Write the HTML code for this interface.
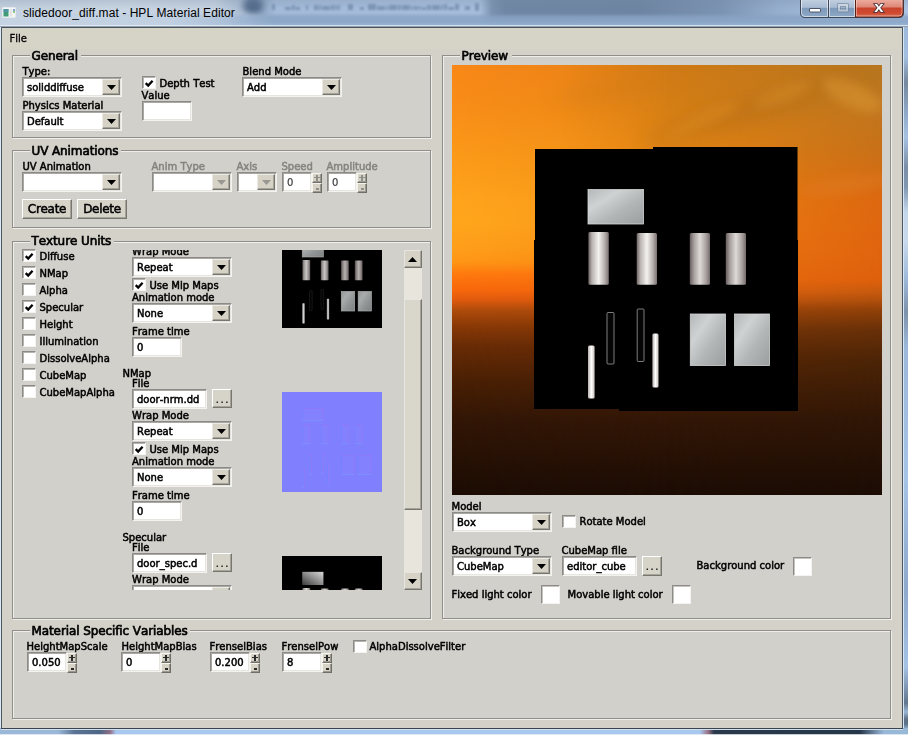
<!DOCTYPE html>
<html><head><meta charset="utf-8"><title>slidedoor_diff.mat - HPL Material Editor</title>
<style>
html,body{margin:0;padding:0}
body{width:908px;height:735px;overflow:hidden;position:relative;background:#a6c4e6;font-family:"DejaVu Sans","Liberation Sans",sans-serif;font-kerning:none}
#tb{position:absolute;left:0;top:0;width:908px;height:27px;background:linear-gradient(90deg,#c3d0de 0px,#c9d5e2 120px,#c4d1e0 215px,#9fb3cb 250px,#8fa6c2 262px,#a3bad8 275px,#a6bddb 480px,#7a91af 492px,#6f86a4 505px,#6d84a2 640px,#7b93b2 720px,#96afcf 780px,#a4bcda 830px,#aac4e2 908px)}
#tbs{position:absolute;left:0;top:0;width:908px;height:27px;background:linear-gradient(180deg,rgba(120,140,165,.25) 0,rgba(255,255,255,0) 9px,rgba(255,255,255,0) 13px,rgba(136,163,197,.8) 17px,rgba(139,167,200,.95) 22px,rgba(150,178,210,.95) 25px)}
#tbg{position:absolute;left:0;top:9px;width:280px;height:17px;background:linear-gradient(90deg,rgba(200,213,228,.95) 0,rgba(198,212,228,.9) 170px,rgba(190,206,226,.6) 225px,rgba(170,190,215,0) 275px);-webkit-mask-image:linear-gradient(180deg,transparent 0,#000 7px);mask-image:linear-gradient(180deg,transparent 0,#000 7px)}
#tbl{position:absolute;left:0;top:25px;width:908px;height:3px;background:linear-gradient(180deg,rgba(230,240,250,.55) 0,rgba(235,243,252,.9) 1px,#46525e 2px,#46525e 3px)}
#title{position:absolute;left:23px;top:4px;font-family:"Liberation Sans",sans-serif;font-size:12px;letter-spacing:0.06px;line-height:18px;color:#000;white-space:nowrap}
#client{position:absolute;left:2px;top:28px;width:900px;height:700px;background:#d4d1c9}
#menu{position:absolute;left:2px;top:28px;width:900px;height:21px;background:#d6d3c7}
#c{position:absolute;left:0;top:0;width:908px;height:735px;will-change:transform}
.t{position:absolute;white-space:nowrap;-webkit-text-stroke:0.5px currentColor}
.gtt{letter-spacing:-0.1px;-webkit-text-stroke:0.65px currentColor}
.grp{position:absolute;box-sizing:border-box;border:1px solid #8f8e8a;box-shadow:1px 1px 0 #efeeea;background:#d1d0cb}
.grpi{position:absolute;left:0;top:0;right:0;bottom:0;border-left:1px solid #efeeea;border-top:1px solid #efeeea}
.gt{position:absolute;background:#d4d1c9}
.sunk{position:absolute;box-sizing:border-box;background:#fff;border-top:1px solid #8c8b87;border-left:1px solid #8c8b87;border-right:1px solid #f4f3f0;border-bottom:1px solid #f4f3f0;box-shadow:inset 1px 1px 0 #a9a8a3, inset -1px -1px 0 #e6e5e0}
.ct{position:absolute;left:4px;top:3px;font-size:10px;line-height:14px;white-space:nowrap;-webkit-text-stroke:0.5px currentColor}
.cbtn{position:absolute;right:1px;top:1px;width:18px;height:16px;box-sizing:border-box;background:#d6d3c6;border-top:1px solid #eceae4;border-left:1px solid #eceae4;border-right:1px solid #77766f;border-bottom:1px solid #77766f;box-shadow:inset -1px -1px 0 #a5a39a}
.chk{position:absolute;width:14px;height:13px;box-sizing:border-box;background:#fff;border-top:1px solid #8c8b87;border-left:1px solid #8c8b87;border-right:1px solid #f4f3f0;border-bottom:1px solid #f4f3f0;box-shadow:inset 1px 1px 0 #b5b4af}
.btn{position:absolute;box-sizing:border-box;background:#d6d3c8;border-top:1px solid #fff;border-left:1px solid #fff;border-right:1px solid #77766f;border-bottom:1px solid #77766f;box-shadow:inset -1px -1px 0 #a5a39a;text-align:center;white-space:nowrap;letter-spacing:-0.3px;-webkit-text-stroke:0.5px currentColor}
.sb{position:absolute;width:10px;height:10px;box-sizing:border-box;background:#d6d3c6;border-top:1px solid #f4f3ee;border-left:1px solid #f4f3ee;border-right:1px solid #6f6e68;border-bottom:1px solid #6f6e68;box-shadow:inset -1px -1px 0 #9a988f}
.sb i{position:absolute;background:#333;display:block}
.colb{position:absolute;width:19px;height:19px;box-sizing:border-box;background:#fff;border-top:1px solid #8c8b87;border-left:1px solid #8c8b87;border-right:1px solid #f4f3f0;border-bottom:1px solid #f4f3f0;box-shadow:inset 1px 1px 0 #c5c4bf}
.clip{position:absolute;overflow:hidden}
.strack{position:absolute;background:#e7e5dc}
.sbtn{position:absolute;width:18px;height:18px;box-sizing:border-box;background:#d6d3c6;border-top:1px solid #e6e5e0;border-left:1px solid #e6e5e0;border-right:1px solid #77766f;border-bottom:1px solid #77766f;box-shadow:inset -1px -1px 0 #a5a39a}
.sthumb{position:absolute;box-sizing:border-box;background:#d9d6cb;border-top:1px solid #e6e5e0;border-left:1px solid #e6e5e0;border-right:1px solid #77766f;border-bottom:1px solid #77766f;box-shadow:inset -1px -1px 0 #a5a39a}
/* window chrome */
#wl{position:absolute;left:0;top:27px;width:2px;height:703px;background:linear-gradient(90deg,#dfe9f3 0,#dfe9f3 1px,#4b5763 1px,#4b5763 2px)}
#wr{position:absolute;left:902px;top:27px;width:6px;height:703px;background:linear-gradient(90deg,#4b5763 0,#4b5763 1px,#dbe7f3 1px,#dbe7f3 2px,rgba(0,0,0,0) 2px),linear-gradient(180deg,#9db9d9 0,#a3bfdf 30px,#76889e 55px,#8ea8c6 85px,#a6c2e2 110px,#7b8ea6 140px,#8097b2 160px,#c4d6ea 185px,#c9d9ec 215px,#9fbbdb 250px,#7d92ac 285px,#9cb8d8 320px,#a6c4e6 450px,#8ea9c9 560px,#a4c2e4 640px,#62768e 676px,#9ab6d4 685px,#5d7188 692px,#5d7188 697px,#a0c0e0 703px)}
#wb{position:absolute;left:0;top:728px;width:908px;height:7px;border-bottom:1px solid rgba(235,243,250,.8);box-sizing:border-box;background:linear-gradient(90deg,#9cb8d8 0,#9cb8d8 58px,#5b7394 74px,#4f6786 100px,#8f6f86 110px,#a8c8f0 116px,#a8c8f0 700px,#9a7384 708px,#2a3a4c 714px,#27374a 860px,#7f9ab8 878px,#98b8d8 884px,#98b8d8 908px)}
#wbl{position:absolute;left:1px;top:728px;width:902px;height:2px;background:linear-gradient(180deg,#3a444e 0,#3a444e 1px,#d3e2f1 1px,#d3e2f1 2px)}
#caps{position:absolute;left:800px;top:0;width:104px;height:18px;will-change:transform}
#ico{position:absolute;left:2px;top:7px;width:14px;height:11px}
</style></head>
<body>
<div id="tb"></div><svg id="smg" width="908" height="27" viewBox="0 0 908 27" style="position:absolute;left:0;top:0"><defs><filter id="sb1" x="-5%" y="-100%" width="110%" height="300%"><feGaussianBlur stdDeviation="1.3"/></filter><filter id="sb2" x="-50%" y="-100%" width="200%" height="300%"><feGaussianBlur stdDeviation="3"/></filter></defs><g filter="url(#sb1)" fill="#5f7899" opacity=".55"><rect x="272" y="4" width="3" height="6"/><rect x="285" y="7" width="6" height="3"/><rect x="292" y="5" width="3" height="5"/><rect x="296" y="7" width="4" height="3"/><rect x="306" y="5" width="2" height="5"/><rect x="314" y="5" width="4" height="5"/><rect x="319" y="5" width="2" height="5"/><rect x="322" y="6" width="8" height="4"/><rect x="331" y="5" width="3" height="5"/><rect x="335" y="5" width="2" height="5"/><rect x="338" y="5" width="2" height="5"/><rect x="348" y="4" width="5" height="6"/><rect x="360" y="7" width="4" height="3"/><rect x="368" y="4" width="8" height="6"/><rect x="377" y="6" width="8" height="4"/><rect x="386" y="6" width="2" height="4"/><rect x="389" y="5" width="8" height="5"/><rect x="398" y="5" width="3" height="5"/><rect x="402" y="5" width="8" height="5"/><rect x="411" y="6" width="2" height="4"/><rect x="414" y="6" width="4" height="4"/><rect x="419" y="6" width="2" height="4"/><rect x="422" y="7" width="4" height="3"/><rect x="427" y="5" width="4" height="5"/><rect x="432" y="5" width="8" height="5"/><rect x="441" y="5" width="2" height="5"/><rect x="444" y="4" width="3" height="6"/><rect x="448" y="7" width="6" height="3"/><rect x="455" y="4" width="4" height="6"/><rect x="465" y="6" width="5" height="4"/><rect x="475" y="3" width="4" height="8"/></g><ellipse cx="253" cy="5" rx="10" ry="10" fill="#4c6384" opacity=".9" filter="url(#sb2)"/></svg><div id="tbs"></div><div id="tbg"></div><div id="tbl"></div>
<svg id="ico" viewBox="0 0 14 11"><rect x="0" y="0" width="14" height="11" rx="1" fill="#f4f6f8" stroke="#c2cad2" stroke-width="0.6"/><rect x="1.5" y="2" width="5" height="7.5" fill="#3f9a78"/><rect x="1.5" y="2" width="5" height="3" fill="#5b8fc0" opacity=".6"/><rect x="7.6" y="2" width="2.6" height="7.5" fill="#e3e3e3"/><rect x="11" y="2" width="2" height="3.5" fill="#7fa6cf"/><rect x="11" y="4" width="2" height="1.8" fill="#8fc77f"/></svg>
<div id="title">slidedoor_diff.mat - HPL Material Editor</div>
<svg id="caps" viewBox="0 0 104 18">
<defs>
<linearGradient id="gb" x1="0" y1="0" x2="0" y2="1"><stop offset="0" stop-color="#c3d0e0"/><stop offset=".45" stop-color="#a9bcd3"/><stop offset=".5" stop-color="#7e99b9"/><stop offset="1" stop-color="#8fa9c8"/></linearGradient>
<linearGradient id="gr" x1="0" y1="0" x2="0" y2="1"><stop offset="0" stop-color="#eeb1a3"/><stop offset=".45" stop-color="#dd8574"/><stop offset=".5" stop-color="#c9422b"/><stop offset=".8" stop-color="#cf4b32"/><stop offset="1" stop-color="#d97a62"/></linearGradient>
</defs>
<path d="M0.5 -1V13Q0.5 17.5 5 17.5H99Q103.5 17.5 103.5 13V-1Z" fill="url(#gb)" stroke="#3c4858" stroke-width="1"/>
<path d="M55.5 -1H103V13Q103 17 99 17H55.5Z" fill="url(#gr)" stroke="#5a1d14" stroke-width="1"/>
<path d="M1.5 0V13Q1.5 16.5 5 16.5H27.5V0M29.5 0V16.5H54.5V0" fill="none" stroke="rgba(255,255,255,.55)" stroke-width="1"/>
<path d="M56.5 0V16H99Q102 16 102 13V0" fill="none" stroke="rgba(255,220,210,.5)" stroke-width="1"/>
<line x1="28.5" y1="0" x2="28.5" y2="17" stroke="#3c4858"/>
<rect x="9.5" y="8.5" width="11" height="3.5" rx=".5" fill="#fff" stroke="#4a5668" stroke-width="1"/>
<g opacity=".55"><rect x="37.5" y="3.5" width="11" height="8.500" rx=".5" fill="#dfe6ee" stroke="#6d7c8f" stroke-width="1"/><rect x="40.500" y="6.500" width="5" height="2.500" fill="#9fb2c8" stroke="#6d7c8f" stroke-width="1"/></g>
<text x="79" y="11.8" text-anchor="middle" font-family="Liberation Sans, sans-serif" font-weight="bold" font-size="14.5" fill="#fff" stroke="#46323c" stroke-width="1.6" paint-order="stroke" transform="translate(79 0) scale(1.15 1) translate(-79 0)">x</text>
</svg>
<div id="client"></div><div id="menu"></div>
<div id="wl"></div><div id="wr"></div><div id="wb"></div><div id="wbl"></div>
<div id="c">
<div class="t" style="left:9.5px;top:32px;font-size:10px;line-height:14px;-webkit-text-stroke-width:0.3px">File</div>
<div class="grp" style="left:12px;top:55px;width:419px;height:83px"><div class="grpi"></div></div>
<div class="gt" style="left:29.5px;top:55px;width:51.5px;height:1px"></div><div class="gt" style="left:29.5px;top:56px;width:51.5px;height:1px;background:#d1d0cb"></div>
<div class="t gtt" style="left:31.5px;top:48px;font-size:12px;line-height:16px;color:#000;">General</div>
<div class="grp" style="left:12px;top:150px;width:419px;height:78px"><div class="grpi"></div></div>
<div class="gt" style="left:29.5px;top:150px;width:91.5px;height:1px"></div><div class="gt" style="left:29.5px;top:151px;width:91.5px;height:1px;background:#d1d0cb"></div>
<div class="t gtt" style="left:31.5px;top:143px;font-size:12px;line-height:16px;color:#000;">UV Animations</div>
<div class="grp" style="left:12px;top:241px;width:419px;height:378px"><div class="grpi"></div></div>
<div class="gt" style="left:29.5px;top:241px;width:84.5px;height:1px"></div><div class="gt" style="left:29.5px;top:242px;width:84.5px;height:1px;background:#d1d0cb"></div>
<div class="t gtt" style="left:31.5px;top:233px;font-size:12px;line-height:16px;color:#000;">Texture Units</div>
<div class="grp" style="left:442px;top:55px;width:449px;height:564px"><div class="grpi"></div></div>
<div class="gt" style="left:459.5px;top:55px;width:52.5px;height:1px"></div><div class="gt" style="left:459.5px;top:56px;width:52.5px;height:1px;background:#d1d0cb"></div>
<div class="t gtt" style="left:461.5px;top:48px;font-size:12px;line-height:16px;color:#000;">Preview</div>
<div class="grp" style="left:12px;top:630px;width:879px;height:89px"><div class="grpi"></div></div>
<div class="gt" style="left:29.5px;top:630px;width:160.5px;height:1px"></div><div class="gt" style="left:29.5px;top:631px;width:160.5px;height:1px;background:#d1d0cb"></div>
<div class="t gtt" style="left:31.5px;top:623px;font-size:12px;line-height:16px;color:#000;">Material Specific Variables</div>
<div class="t " style="left:22.5px;top:65px;font-size:10px;line-height:14px;color:#000;">Type:</div>
<div class="sunk" style="left:22px;top:77px;width:100px;height:20px"><span class="ct" style="color:#000">soliddiffuse</span><div class="cbtn"><svg width="9" height="5" viewBox="0 0 9 5" style="position:absolute;left:4px;top:5px"><path d="M0 0H9L4.5 5Z" fill="#000"/></svg></div></div>
<div class="t " style="left:22.5px;top:99px;font-size:10px;line-height:14px;color:#000;">Physics Material</div>
<div class="sunk" style="left:22px;top:111px;width:100px;height:20px"><span class="ct" style="color:#000">Default</span><div class="cbtn"><svg width="9" height="5" viewBox="0 0 9 5" style="position:absolute;left:4px;top:5px"><path d="M0 0H9L4.5 5Z" fill="#000"/></svg></div></div>
<div class="chk" style="left:142px;top:76px"><svg width="13" height="13" viewBox="0 0 13 13" style="position:absolute;left:0;top:0"><path d="M2.7 6.1L5.2 8.6L9.6 3.8" stroke="#000" stroke-width="2.3" fill="none"/></svg></div>
<div class="t " style="left:159.5px;top:77px;font-size:10px;line-height:14px;color:#000;">Depth Test</div>
<div class="t " style="left:141.5px;top:89px;font-size:10px;line-height:14px;color:#000;">Value</div>
<div class="sunk" style="left:142px;top:101px;width:50px;height:20px"><span class="ct" style="left:4px"></span></div>
<div class="t " style="left:242.5px;top:65px;font-size:10px;line-height:14px;color:#000;">Blend Mode</div>
<div class="sunk" style="left:242px;top:77px;width:100px;height:20px"><span class="ct" style="color:#000">Add</span><div class="cbtn"><svg width="9" height="5" viewBox="0 0 9 5" style="position:absolute;left:4px;top:5px"><path d="M0 0H9L4.5 5Z" fill="#000"/></svg></div></div>
<div class="t " style="left:22.5px;top:160px;font-size:10px;line-height:14px;color:#000;">UV Animation</div>
<div class="sunk" style="left:22px;top:172px;width:100px;height:20px"><span class="ct" style="color:#000"></span><div class="cbtn"><svg width="9" height="5" viewBox="0 0 9 5" style="position:absolute;left:4px;top:5px"><path d="M0 0H9L4.5 5Z" fill="#000"/></svg></div></div>
<div class="t " style="left:151.5px;top:160px;font-size:10px;line-height:14px;color:#85847f;">Anim Type</div>
<div class="sunk" style="left:152px;top:172px;width:80px;height:20px"><span class="ct" style="color:#8a8a86"></span><div class="cbtn"><svg width="9" height="5" viewBox="0 0 9 5" style="position:absolute;left:4px;top:5px"><path d="M0 0H9L4.5 5Z" fill="#9a9892"/></svg></div></div>
<div class="t " style="left:236.5px;top:160px;font-size:10px;line-height:14px;color:#85847f;">Axis</div>
<div class="sunk" style="left:237px;top:172px;width:40px;height:20px"><span class="ct" style="color:#8a8a86"></span><div class="cbtn"><svg width="9" height="5" viewBox="0 0 9 5" style="position:absolute;left:4px;top:5px"><path d="M0 0H9L4.5 5Z" fill="#9a9892"/></svg></div></div>
<div class="t " style="left:281.5px;top:160px;font-size:10px;line-height:14px;color:#85847f;">Speed</div>
<div class="sunk" style="left:282px;top:172px;width:30px;height:20px"><span class="ct" style="left:4px;color:#3c3c3c;-webkit-text-stroke-width:0.2px">0</span></div><div class="sb" style="left:312px;top:173px"><i style="left:1px;top:3px;width:6px;height:1.3px;background:#8f8e88"></i><i style="left:3.3px;top:0.5px;width:1.4px;height:6.5px;background:#8f8e88"></i></div><div class="sb" style="left:312px;top:183px"><i style="left:2.5px;top:4px;width:3.5px;height:1.5px;background:#8f8e88"></i></div>
<div class="t " style="left:326.5px;top:160px;font-size:10px;line-height:14px;color:#85847f;">Amplitude</div>
<div class="sunk" style="left:327px;top:172px;width:30px;height:20px"><span class="ct" style="left:4px;color:#3c3c3c;-webkit-text-stroke-width:0.2px">0</span></div><div class="sb" style="left:357px;top:173px"><i style="left:1px;top:3px;width:6px;height:1.3px;background:#8f8e88"></i><i style="left:3.3px;top:0.5px;width:1.4px;height:6.5px;background:#8f8e88"></i></div><div class="sb" style="left:357px;top:183px"><i style="left:2.5px;top:4px;width:3.5px;height:1.5px;background:#8f8e88"></i></div>
<div class="btn" style="left:22px;top:199px;width:50px;height:20px;font-size:12px;line-height:18px">Create</div>
<div class="btn" style="left:77px;top:199px;width:50px;height:20px;font-size:12px;line-height:18px">Delete</div>
<div class="chk" style="left:22px;top:249px"><svg width="13" height="13" viewBox="0 0 13 13" style="position:absolute;left:0;top:0"><path d="M2.7 6.1L5.2 8.6L9.6 3.8" stroke="#000" stroke-width="2.3" fill="none"/></svg></div>
<div class="t " style="left:39.5px;top:250px;font-size:10px;line-height:14px;color:#000;">Diffuse</div>
<div class="chk" style="left:22px;top:266px"><svg width="13" height="13" viewBox="0 0 13 13" style="position:absolute;left:0;top:0"><path d="M2.7 6.1L5.2 8.6L9.6 3.8" stroke="#000" stroke-width="2.3" fill="none"/></svg></div>
<div class="t " style="left:39.5px;top:267px;font-size:10px;line-height:14px;color:#000;">NMap</div>
<div class="chk" style="left:22px;top:283px"></div>
<div class="t " style="left:39.5px;top:284px;font-size:10px;line-height:14px;color:#000;">Alpha</div>
<div class="chk" style="left:22px;top:300px"><svg width="13" height="13" viewBox="0 0 13 13" style="position:absolute;left:0;top:0"><path d="M2.7 6.1L5.2 8.6L9.6 3.8" stroke="#000" stroke-width="2.3" fill="none"/></svg></div>
<div class="t " style="left:39.5px;top:301px;font-size:10px;line-height:14px;color:#000;">Specular</div>
<div class="chk" style="left:22px;top:317px"></div>
<div class="t " style="left:39.5px;top:318px;font-size:10px;line-height:14px;color:#000;">Height</div>
<div class="chk" style="left:22px;top:334px"></div>
<div class="t " style="left:39.5px;top:335px;font-size:10px;line-height:14px;color:#000;">Illumination</div>
<div class="chk" style="left:22px;top:351px"></div>
<div class="t " style="left:39.5px;top:352px;font-size:10px;line-height:14px;color:#000;">DissolveAlpha</div>
<div class="chk" style="left:22px;top:368px"></div>
<div class="t " style="left:39.5px;top:369px;font-size:10px;line-height:14px;color:#000;">CubeMap</div>
<div class="chk" style="left:22px;top:385px"></div>
<div class="t " style="left:39.5px;top:386px;font-size:10px;line-height:14px;color:#000;">CubeMapAlpha</div>
<div class="clip" style="left:100px;top:250px;width:300px;height:340px">
<div class="t " style="left:22.5px;top:-47px;font-size:10px;line-height:14px;color:#000;">Diffuse</div>
<div class="t " style="left:32.0px;top:-37px;font-size:10px;line-height:14px;color:#000;">File</div>
<div class="sunk" style="left:32px;top:-25.0px;width:75px;height:20px"><span class="ct" style="left:4px">door_diff.dd</span></div>
<div class="btn" style="left:112px;top:-25.0px;width:20px;height:19px;font-size:10px;line-height:19px"><span style="letter-spacing:1.6px;margin-left:1.6px;-webkit-text-stroke-width:0.2px">...</span></div>
<div class="t " style="left:32.0px;top:-5px;font-size:10px;line-height:14px;color:#000;">Wrap Mode</div>
<div class="sunk" style="left:32px;top:7.0px;width:100px;height:20px"><span class="ct" style="color:#000">Repeat</span><div class="cbtn"><svg width="9" height="5" viewBox="0 0 9 5" style="position:absolute;left:4px;top:5px"><path d="M0 0H9L4.5 5Z" fill="#000"/></svg></div></div>
<div class="chk" style="left:32px;top:28.0px"><svg width="13" height="13" viewBox="0 0 13 13" style="position:absolute;left:0;top:0"><path d="M2.7 6.1L5.2 8.6L9.6 3.8" stroke="#000" stroke-width="2.3" fill="none"/></svg></div>
<div class="t " style="left:49.5px;top:29px;font-size:10px;line-height:14px;color:#000;">Use Mip Maps</div>
<div class="t " style="left:32.0px;top:41px;font-size:10px;line-height:14px;color:#000;">Animation mode</div>
<div class="sunk" style="left:32px;top:53.0px;width:100px;height:20px"><span class="ct" style="color:#000">None</span><div class="cbtn"><svg width="9" height="5" viewBox="0 0 9 5" style="position:absolute;left:4px;top:5px"><path d="M0 0H9L4.5 5Z" fill="#000"/></svg></div></div>
<div class="t " style="left:32.0px;top:75px;font-size:10px;line-height:14px;color:#000;">Frame time</div>
<div class="sunk" style="left:32px;top:87.0px;width:50px;height:20px"><span class="ct" style="left:4px">0</span></div>
<div style="position:absolute;left:182px;top:-22.0px;width:100px;height:100px"><svg width="100" height="100" viewBox="0 0 100 100" style="display:block"><rect width="100" height="100" fill="#000"/><g transform="scale(0.3817)" opacity=".82"><rect x="53.0" y="41.5" width="55.5" height="34.5" fill="url(#sil)" stroke="#d4d6d6" stroke-width="1.6"/><rect x="53.4" y="84.0" width="20.4" height="52.7" fill="url(#cyl)" rx="1.5"/><rect x="101.7" y="85.0" width="20.3" height="51.7" fill="url(#cyl)" rx="1.5"/><rect x="154.8" y="85.0" width="20.2" height="51.7" fill="url(#cyl2)" rx="1.5"/><rect x="190.8" y="85.0" width="20.2" height="51.7" fill="url(#cyl2)" rx="1.5"/><rect x="53.0" y="197.4" width="6.6" height="53.0" fill="url(#bar)" rx="1.5"/><rect x="117.4" y="185.5" width="6.1" height="54.0" fill="url(#bar)" rx="1.5"/><rect x="72.0" y="164.5" width="7.0" height="51.5" fill="#050505" stroke="#2c2c2c" stroke-width="1.6" rx="1"/><rect x="102.2" y="161.0" width="6.8" height="52.5" fill="#050505" stroke="#2c2c2c" stroke-width="1.6" rx="1"/><rect x="155.3" y="166.0" width="35.2" height="51.5" fill="url(#sil)" stroke="#d4d6d6" stroke-width="1.6"/><rect x="199.5" y="166.0" width="35.0" height="51.5" fill="url(#sil)" stroke="#d4d6d6" stroke-width="1.6"/></g></svg></div>
<div class="t " style="left:22.5px;top:117px;font-size:10px;line-height:14px;color:#000;">NMap</div>
<div class="t " style="left:32.0px;top:127px;font-size:10px;line-height:14px;color:#000;">File</div>
<div class="sunk" style="left:32px;top:139.0px;width:75px;height:20px"><span class="ct" style="left:4px">door-nrm.dd</span></div>
<div class="btn" style="left:112px;top:139.0px;width:20px;height:19px;font-size:10px;line-height:19px"><span style="letter-spacing:1.6px;margin-left:1.6px;-webkit-text-stroke-width:0.2px">...</span></div>
<div class="t " style="left:32.0px;top:159px;font-size:10px;line-height:14px;color:#000;">Wrap Mode</div>
<div class="sunk" style="left:32px;top:171.0px;width:100px;height:20px"><span class="ct" style="color:#000">Repeat</span><div class="cbtn"><svg width="9" height="5" viewBox="0 0 9 5" style="position:absolute;left:4px;top:5px"><path d="M0 0H9L4.5 5Z" fill="#000"/></svg></div></div>
<div class="chk" style="left:32px;top:192.0px"><svg width="13" height="13" viewBox="0 0 13 13" style="position:absolute;left:0;top:0"><path d="M2.7 6.1L5.2 8.6L9.6 3.8" stroke="#000" stroke-width="2.3" fill="none"/></svg></div>
<div class="t " style="left:49.5px;top:193px;font-size:10px;line-height:14px;color:#000;">Use Mip Maps</div>
<div class="t " style="left:32.0px;top:205px;font-size:10px;line-height:14px;color:#000;">Animation mode</div>
<div class="sunk" style="left:32px;top:217.0px;width:100px;height:20px"><span class="ct" style="color:#000">None</span><div class="cbtn"><svg width="9" height="5" viewBox="0 0 9 5" style="position:absolute;left:4px;top:5px"><path d="M0 0H9L4.5 5Z" fill="#000"/></svg></div></div>
<div class="t " style="left:32.0px;top:239px;font-size:10px;line-height:14px;color:#000;">Frame time</div>
<div class="sunk" style="left:32px;top:251.0px;width:50px;height:20px"><span class="ct" style="left:4px">0</span></div>
<div style="position:absolute;left:182px;top:142.0px;width:100px;height:100px"><svg width="100" height="100" viewBox="0 0 100 100" style="display:block"><rect width="100" height="100" fill="#8080ff"/><g transform="scale(0.3817)" opacity=".75"><rect x="53.0" y="41.5" width="55.5" height="34.5" fill="#8482fd"/><rect x="53.0" y="41.5" width="2.2" height="34.5" fill="#7284ff"/><rect x="106.3" y="41.5" width="2.2" height="34.5" fill="#9678f6"/><rect x="53.0" y="41.5" width="55.5" height="2.2" fill="#9476f2"/><rect x="53.0" y="73.8" width="55.5" height="2.2" fill="#7c98ff"/><rect x="53.4" y="84.0" width="20.4" height="52.7" fill="#8482fd"/><rect x="53.4" y="84.0" width="2.2" height="52.7" fill="#7284ff"/><rect x="71.6" y="84.0" width="2.2" height="52.7" fill="#9678f6"/><rect x="53.4" y="84.0" width="20.4" height="2.2" fill="#9476f2"/><rect x="53.4" y="134.5" width="20.4" height="2.2" fill="#7c98ff"/><rect x="101.7" y="85.0" width="20.3" height="51.7" fill="#8482fd"/><rect x="101.7" y="85.0" width="2.2" height="51.7" fill="#7284ff"/><rect x="119.8" y="85.0" width="2.2" height="51.7" fill="#9678f6"/><rect x="101.7" y="85.0" width="20.3" height="2.2" fill="#9476f2"/><rect x="101.7" y="134.5" width="20.3" height="2.2" fill="#7c98ff"/><rect x="154.8" y="85.0" width="20.2" height="51.7" fill="#8482fd"/><rect x="154.8" y="85.0" width="2.2" height="51.7" fill="#7284ff"/><rect x="172.8" y="85.0" width="2.2" height="51.7" fill="#9678f6"/><rect x="154.8" y="85.0" width="20.2" height="2.2" fill="#9476f2"/><rect x="154.8" y="134.5" width="20.2" height="2.2" fill="#7c98ff"/><rect x="190.8" y="85.0" width="20.2" height="51.7" fill="#8482fd"/><rect x="190.8" y="85.0" width="2.2" height="51.7" fill="#7284ff"/><rect x="208.8" y="85.0" width="2.2" height="51.7" fill="#9678f6"/><rect x="190.8" y="85.0" width="20.2" height="2.2" fill="#9476f2"/><rect x="190.8" y="134.5" width="20.2" height="2.2" fill="#7c98ff"/><rect x="53.0" y="197.4" width="6.6" height="53.0" fill="#8482fd"/><rect x="53.0" y="197.4" width="2.2" height="53.0" fill="#7284ff"/><rect x="57.4" y="197.4" width="2.2" height="53.0" fill="#9678f6"/><rect x="53.0" y="197.4" width="6.6" height="2.2" fill="#9476f2"/><rect x="53.0" y="248.2" width="6.6" height="2.2" fill="#7c98ff"/><rect x="117.4" y="185.5" width="6.1" height="54.0" fill="#8482fd"/><rect x="117.4" y="185.5" width="2.2" height="54.0" fill="#7284ff"/><rect x="121.3" y="185.5" width="2.2" height="54.0" fill="#9678f6"/><rect x="117.4" y="185.5" width="6.1" height="2.2" fill="#9476f2"/><rect x="117.4" y="237.3" width="6.1" height="2.2" fill="#7c98ff"/><rect x="72.0" y="164.5" width="7.0" height="51.5" fill="#8482fd"/><rect x="72.0" y="164.5" width="2.2" height="51.5" fill="#7284ff"/><rect x="76.8" y="164.5" width="2.2" height="51.5" fill="#9678f6"/><rect x="72.0" y="164.5" width="7.0" height="2.2" fill="#9476f2"/><rect x="72.0" y="213.8" width="7.0" height="2.2" fill="#7c98ff"/><rect x="102.2" y="161.0" width="6.8" height="52.5" fill="#8482fd"/><rect x="102.2" y="161.0" width="2.2" height="52.5" fill="#7284ff"/><rect x="106.8" y="161.0" width="2.2" height="52.5" fill="#9678f6"/><rect x="102.2" y="161.0" width="6.8" height="2.2" fill="#9476f2"/><rect x="102.2" y="211.3" width="6.8" height="2.2" fill="#7c98ff"/><rect x="155.3" y="166.0" width="35.2" height="51.5" fill="#8482fd"/><rect x="155.3" y="166.0" width="2.2" height="51.5" fill="#7284ff"/><rect x="188.3" y="166.0" width="2.2" height="51.5" fill="#9678f6"/><rect x="155.3" y="166.0" width="35.2" height="2.2" fill="#9476f2"/><rect x="155.3" y="215.3" width="35.2" height="2.2" fill="#7c98ff"/><rect x="199.5" y="166.0" width="35.0" height="51.5" fill="#8482fd"/><rect x="199.5" y="166.0" width="2.2" height="51.5" fill="#7284ff"/><rect x="232.3" y="166.0" width="2.2" height="51.5" fill="#9678f6"/><rect x="199.5" y="166.0" width="35.0" height="2.2" fill="#9476f2"/><rect x="199.5" y="215.3" width="35.0" height="2.2" fill="#7c98ff"/></g></svg></div>
<div class="t " style="left:22.5px;top:281px;font-size:10px;line-height:14px;color:#000;">Specular</div>
<div class="t " style="left:32.0px;top:291px;font-size:10px;line-height:14px;color:#000;">File</div>
<div class="sunk" style="left:32px;top:303.0px;width:75px;height:20px"><span class="ct" style="left:4px">door_spec.d</span></div>
<div class="btn" style="left:112px;top:303.0px;width:20px;height:19px;font-size:10px;line-height:19px"><span style="letter-spacing:1.6px;margin-left:1.6px;-webkit-text-stroke-width:0.2px">...</span></div>
<div class="t " style="left:32.0px;top:323px;font-size:10px;line-height:14px;color:#000;">Wrap Mode</div>
<div class="sunk" style="left:32px;top:335.0px;width:100px;height:20px"><span class="ct" style="color:#000">Repeat</span><div class="cbtn"><svg width="9" height="5" viewBox="0 0 9 5" style="position:absolute;left:4px;top:5px"><path d="M0 0H9L4.5 5Z" fill="#000"/></svg></div></div>
<div class="chk" style="left:32px;top:356.0px"><svg width="13" height="13" viewBox="0 0 13 13" style="position:absolute;left:0;top:0"><path d="M2.7 6.1L5.2 8.6L9.6 3.8" stroke="#000" stroke-width="2.3" fill="none"/></svg></div>
<div class="t " style="left:49.5px;top:357px;font-size:10px;line-height:14px;color:#000;">Use Mip Maps</div>
<div class="t " style="left:32.0px;top:369px;font-size:10px;line-height:14px;color:#000;">Animation mode</div>
<div class="sunk" style="left:32px;top:381.0px;width:100px;height:20px"><span class="ct" style="color:#000">None</span><div class="cbtn"><svg width="9" height="5" viewBox="0 0 9 5" style="position:absolute;left:4px;top:5px"><path d="M0 0H9L4.5 5Z" fill="#000"/></svg></div></div>
<div class="t " style="left:32.0px;top:403px;font-size:10px;line-height:14px;color:#000;">Frame time</div>
<div class="sunk" style="left:32px;top:415.0px;width:50px;height:20px"><span class="ct" style="left:4px">0</span></div>
<div style="position:absolute;left:182px;top:306.0px;width:100px;height:100px"><svg width="100" height="100" viewBox="0 0 100 100" style="display:block"><rect width="100" height="100" fill="#000"/><g transform="scale(0.3817)" ><rect x="53.0" y="41.5" width="55.5" height="34.5" fill="url(#spg)"/><rect x="53.4" y="84.0" width="20.4" height="52.7" fill="url(#cyl2)" rx="1.5"/><rect x="101.7" y="85.0" width="20.3" height="51.7" fill="url(#cyl2)" rx="1.5"/><rect x="154.8" y="85.0" width="20.2" height="51.7" fill="url(#cyl2)" rx="1.5"/><rect x="190.8" y="85.0" width="20.2" height="51.7" fill="url(#cyl2)" rx="1.5"/><rect x="53.0" y="197.4" width="6.6" height="53.0" fill="url(#bar)" rx="1.5"/><rect x="117.4" y="185.5" width="6.1" height="54.0" fill="url(#bar)" rx="1.5"/><rect x="155.3" y="166.0" width="35.2" height="51.5" fill="url(#spg)"/><rect x="199.5" y="166.0" width="35.0" height="51.5" fill="url(#spg)"/></g></svg></div>
</div>
<div class="strack" style="left:404px;top:250px;width:18px;height:340px"></div>
<div class="sbtn" style="left:404px;top:250px"><svg width="9" height="5" viewBox="0 0 9 5" style="position:absolute;left:3px;top:6px"><path d="M0 5H9L4.5 0Z" fill="#000"/></svg></div>
<div class="sbtn" style="left:404px;top:572px"><svg width="9" height="5" viewBox="0 0 9 5" style="position:absolute;left:3px;top:6px"><path d="M0 0H9L4.5 5Z" fill="#000"/></svg></div>
<div class="sthumb" style="left:404px;top:299px;width:18px;height:211px"></div>
<div style="position:absolute;left:452px;top:65px;width:430px;height:430px;overflow:hidden"><svg width="430" height="430" viewBox="0 0 430 430" style="display:block">
<defs>
<linearGradient id="sky" x1="0" y1="0" x2="0" y2="430" gradientUnits="userSpaceOnUse">
<stop offset="0" stop-color="#cc7c18"/>
<stop offset="0.1" stop-color="#d48018"/>
<stop offset="0.2" stop-color="#e08414"/>
<stop offset="0.37" stop-color="#ee8810"/>
<stop offset="0.48" stop-color="#ea7a0c"/>
<stop offset="0.53" stop-color="#e06c0a"/>
<stop offset="1" stop-color="#e06c0a"/>
</linearGradient>
<radialGradient id="sun" cx="-20" cy="160" r="300" gradientUnits="userSpaceOnUse" gradientTransform="translate(-20 160) scale(1 0.5) translate(20 -160)">
<stop offset="0" stop-color="#ffb020" stop-opacity="1"/>
<stop offset="0.3" stop-color="#ffa81c" stop-opacity=".8"/>
<stop offset="0.6" stop-color="#fc9814" stop-opacity=".4"/>
<stop offset="1" stop-color="#f08a0c" stop-opacity="0"/>
</radialGradient>
<linearGradient id="tl" x1="0" y1="0" x2="260" y2="90" gradientUnits="userSpaceOnUse">
<stop offset="0" stop-color="#fb8716" stop-opacity="1"/><stop offset=".35" stop-color="#f98816" stop-opacity=".8"/><stop offset="1" stop-color="#f48a12" stop-opacity="0"/>
</linearGradient>
<linearGradient id="fade" x1="0" y1="0" x2="0" y2="430" gradientUnits="userSpaceOnUse">
<stop offset="0.515" stop-color="#c45a08" stop-opacity="0"/>
<stop offset="0.545" stop-color="#b85408" stop-opacity=".6"/>
<stop offset="0.57" stop-color="#924008" stop-opacity="1"/>
<stop offset="0.61" stop-color="#663008"/>
<stop offset="0.68" stop-color="#4a2408"/>
<stop offset="0.83" stop-color="#2e1606"/>
<stop offset="1" stop-color="#1c0c04"/>
</linearGradient>
<linearGradient id="rdark" x1="120" y1="330" x2="430" y2="0" gradientUnits="userSpaceOnUse">
<stop offset="0" stop-color="#a86418" stop-opacity="0"/><stop offset=".55" stop-color="#b06a1a" stop-opacity=".25"/><stop offset="1" stop-color="#a8701e" stop-opacity=".7"/>
</linearGradient>
<linearGradient id="rred" x1="200" y1="40" x2="400" y2="220" gradientUnits="userSpaceOnUse">
<stop offset="0" stop-color="#e0640e" stop-opacity="0"/><stop offset="1" stop-color="#e0640e" stop-opacity=".8"/>
</linearGradient>
<filter id="b12" x="-50%" y="-50%" width="200%" height="200%"><feGaussianBlur stdDeviation="10"/></filter>
<filter id="b6" x="-50%" y="-50%" width="200%" height="200%"><feGaussianBlur stdDeviation="5"/></filter>
<linearGradient id="cyl" x1="0" y1="0" x2="1" y2="0">
<stop offset="0" stop-color="#6e6464"/><stop offset=".18" stop-color="#b9b3b1"/><stop offset=".5" stop-color="#f4f2f0"/><stop offset=".8" stop-color="#b5aeac"/><stop offset="1" stop-color="#7b7170"/>
</linearGradient>
<linearGradient id="sil" x1="0" y1="0" x2="1" y2="1">
<stop offset="0" stop-color="#b4b8b8"/><stop offset=".3" stop-color="#cfd2d2"/><stop offset=".6" stop-color="#b2b6b6"/><stop offset="1" stop-color="#9a9e9e"/>
</linearGradient>
<linearGradient id="cyl2" x1="0" y1="0" x2="1" y2="0">
<stop offset="0" stop-color="#665e5e"/><stop offset=".2" stop-color="#a49d9b"/><stop offset=".5" stop-color="#dedad8"/><stop offset=".8" stop-color="#a8a19f"/><stop offset="1" stop-color="#746c6b"/>
</linearGradient>
<linearGradient id="spg" x1="1" y1="0" x2="0" y2="1">
<stop offset="0" stop-color="#d8d8d8"/><stop offset=".5" stop-color="#8c8c8c"/><stop offset="1" stop-color="#3a3a3a"/>
</linearGradient>
<linearGradient id="bar" x1="0" y1="0" x2="1" y2="0">
<stop offset="0" stop-color="#b8b0ae"/><stop offset=".5" stop-color="#fff"/><stop offset="1" stop-color="#c8c0be"/>
</linearGradient>
</defs>
<defs><linearGradient id="cL" x1="0" y1="0" x2="0" y2="430" gradientUnits="userSpaceOnUse"><stop offset="0.0000" stop-color="#f98818"/><stop offset="0.1047" stop-color="#f98e18"/><stop offset="0.1977" stop-color="#fb9819"/><stop offset="0.3140" stop-color="#ffa41c"/><stop offset="0.3721" stop-color="#ffa61c"/><stop offset="0.4302" stop-color="#ff9e1a"/><stop offset="0.4581" stop-color="#ff9616"/><stop offset="0.4884" stop-color="#ff780e"/><stop offset="0.5233" stop-color="#f8680c"/><stop offset="0.5465" stop-color="#e05a0e"/><stop offset="0.5698" stop-color="#b04c0c"/><stop offset="0.6047" stop-color="#8c3a06"/><stop offset="0.6512" stop-color="#6a2c06"/><stop offset="0.7326" stop-color="#4a2004"/><stop offset="0.8256" stop-color="#321606"/><stop offset="1.0000" stop-color="#1c0c04"/></linearGradient><linearGradient id="cM" x1="0" y1="0" x2="0" y2="430" gradientUnits="userSpaceOnUse"><stop offset="0.0000" stop-color="#d07a16"/><stop offset="0.0814" stop-color="#d47e16"/><stop offset="0.1744" stop-color="#e08414"/><stop offset="0.3140" stop-color="#ec8412"/><stop offset="0.4070" stop-color="#ee7e12"/><stop offset="0.4581" stop-color="#ec7812"/><stop offset="0.4884" stop-color="#ec7010"/><stop offset="0.5233" stop-color="#e6660e"/><stop offset="0.5465" stop-color="#cc580e"/><stop offset="0.5698" stop-color="#a4480a"/><stop offset="0.6047" stop-color="#843a08"/><stop offset="0.6512" stop-color="#662c06"/><stop offset="0.7326" stop-color="#4a2004"/><stop offset="0.8256" stop-color="#321606"/><stop offset="1.0000" stop-color="#1c0c04"/></linearGradient><linearGradient id="cR" x1="0" y1="0" x2="0" y2="430" gradientUnits="userSpaceOnUse"><stop offset="0.0000" stop-color="#b67620"/><stop offset="0.0814" stop-color="#be7720"/><stop offset="0.1977" stop-color="#c87018"/><stop offset="0.3140" stop-color="#dc6810"/><stop offset="0.4302" stop-color="#e0640e"/><stop offset="0.5000" stop-color="#de600c"/><stop offset="0.5279" stop-color="#c65a0e"/><stop offset="0.5465" stop-color="#b0500c"/><stop offset="0.5698" stop-color="#904008"/><stop offset="0.6163" stop-color="#683008"/><stop offset="0.6860" stop-color="#4c2406"/><stop offset="0.8256" stop-color="#301606"/><stop offset="1.0000" stop-color="#1c0c04"/></linearGradient><linearGradient id="mM" x1="0" y1="0" x2="215" y2="0" gradientUnits="userSpaceOnUse"><stop offset="0" stop-color="#000"/><stop offset=".5" stop-color="#3c3c3c"/><stop offset="1" stop-color="#fff"/></linearGradient><linearGradient id="mR" x1="215" y1="0" x2="430" y2="0" gradientUnits="userSpaceOnUse"><stop offset="0" stop-color="#000"/><stop offset="1" stop-color="#fff"/></linearGradient><mask id="kM" maskUnits="userSpaceOnUse" x="0" y="0" width="430" height="430"><rect width="430" height="430" fill="url(#mM)"/></mask><mask id="kR" maskUnits="userSpaceOnUse" x="0" y="0" width="430" height="430"><rect width="430" height="430" fill="url(#mR)"/></mask></defs>
<rect width="430" height="430" fill="url(#cL)"/>
<rect width="430" height="430" fill="url(#cM)" mask="url(#kM)"/>
<rect width="430" height="430" fill="url(#cR)" mask="url(#kR)"/>
<g filter="url(#b12)" opacity=".45"><ellipse cx="300" cy="45" rx="120" ry="12" fill="#b06a14" transform="rotate(-16 300 45)"/><ellipse cx="170" cy="22" rx="70" ry="9" fill="#d07c14" transform="rotate(-10 170 22)"/></g>
<g filter="url(#b6)" opacity=".5"><ellipse cx="400" cy="30" rx="32" ry="12" fill="#dc9834" transform="rotate(25 400 30)"/><ellipse cx="330" cy="30" rx="30" ry="8" fill="#d48a28" transform="rotate(-20 330 30)"/><ellipse cx="395" cy="120" rx="45" ry="8" fill="#e07a20" transform="rotate(-8 395 120)"/><ellipse cx="250" cy="55" rx="40" ry="7" fill="#dc8a20" transform="rotate(-25 250 55)"/></g>
<path d="M83 84H201V82H345.5V175H346V346H167V344H82V175H83Z" fill="#000"/>
<g transform="translate(83 83)"><rect x="53.0" y="41.5" width="55.5" height="34.5" fill="url(#sil)" stroke="#d4d6d6" stroke-width="0.8"/><rect x="53.4" y="84.0" width="20.4" height="52.7" fill="url(#cyl)" rx="1.5"/><rect x="101.7" y="85.0" width="20.3" height="51.7" fill="url(#cyl)" rx="1.5"/><rect x="154.8" y="85.0" width="20.2" height="51.7" fill="url(#cyl2)" rx="1.5"/><rect x="190.8" y="85.0" width="20.2" height="51.7" fill="url(#cyl2)" rx="1.5"/><rect x="53.0" y="197.4" width="6.6" height="53.0" fill="url(#bar)" rx="1.5"/><rect x="117.4" y="185.5" width="6.1" height="54.0" fill="url(#bar)" rx="1.5"/><rect x="72.0" y="164.5" width="7.0" height="51.5" fill="#050505" stroke="#9c9c9c" stroke-width="0.8" rx="1"/><rect x="102.2" y="161.0" width="6.8" height="52.5" fill="#050505" stroke="#9c9c9c" stroke-width="0.8" rx="1"/><rect x="155.3" y="166.0" width="35.2" height="51.5" fill="url(#sil)" stroke="#d4d6d6" stroke-width="0.8"/><rect x="199.5" y="166.0" width="35.0" height="51.5" fill="url(#sil)" stroke="#d4d6d6" stroke-width="0.8"/></g>
</svg></div>
<div class="t " style="left:451.5px;top:500px;font-size:10px;line-height:14px;color:#000;">Model</div>
<div class="sunk" style="left:452px;top:512px;width:100px;height:20px"><span class="ct" style="color:#000">Box</span><div class="cbtn"><svg width="9" height="5" viewBox="0 0 9 5" style="position:absolute;left:4px;top:5px"><path d="M0 0H9L4.5 5Z" fill="#000"/></svg></div></div>
<div class="chk" style="left:562px;top:515px"></div>
<div class="t " style="left:579.5px;top:515px;font-size:10px;line-height:14px;color:#000;">Rotate Model</div>
<div class="t " style="left:451.5px;top:544px;font-size:10px;line-height:14px;color:#000;">Background Type</div>
<div class="sunk" style="left:452px;top:556px;width:100px;height:20px"><span class="ct" style="color:#000">CubeMap</span><div class="cbtn"><svg width="9" height="5" viewBox="0 0 9 5" style="position:absolute;left:4px;top:5px"><path d="M0 0H9L4.5 5Z" fill="#000"/></svg></div></div>
<div class="t " style="left:561.5px;top:544px;font-size:10px;line-height:14px;color:#000;">CubeMap file</div>
<div class="sunk" style="left:562px;top:556px;width:75px;height:20px"><span class="ct" style="left:4px">editor_cube</span></div>
<div class="btn" style="left:642px;top:556px;width:20px;height:20px;font-size:10px;line-height:19px"><span style="letter-spacing:1.6px;margin-left:1.6px;-webkit-text-stroke-width:0.2px">...</span></div>
<div class="t " style="left:696.5px;top:559px;font-size:10px;line-height:14px;color:#000;">Background color</div>
<div class="colb" style="left:793px;top:557px"></div>
<div class="t " style="left:451.5px;top:588px;font-size:10px;line-height:14px;color:#000;">Fixed light color</div>
<div class="colb" style="left:541px;top:585px"></div>
<div class="t " style="left:567.5px;top:588px;font-size:10px;line-height:14px;color:#000;">Movable light color</div>
<div class="colb" style="left:672px;top:585px"></div>
<div class="t " style="left:26.5px;top:640px;font-size:10px;line-height:14px;color:#000;">HeightMapScale</div>
<div class="sunk" style="left:27px;top:652px;width:40px;height:20px"><span class="ct" style="left:4px;color:#000;-webkit-text-stroke-width:0.5px">0.050</span></div><div class="sb" style="left:67px;top:653px"><i style="left:1px;top:3px;width:6px;height:1.3px;background:#2a2a2a"></i><i style="left:3.3px;top:0.5px;width:1.4px;height:6.5px;background:#2a2a2a"></i></div><div class="sb" style="left:67px;top:663px"><i style="left:2.5px;top:4px;width:3.5px;height:1.5px;background:#2a2a2a"></i></div>
<div class="t " style="left:121.5px;top:640px;font-size:10px;line-height:14px;color:#000;">HeightMapBias</div>
<div class="sunk" style="left:121px;top:652px;width:40px;height:20px"><span class="ct" style="left:4px;color:#000;-webkit-text-stroke-width:0.5px">0</span></div><div class="sb" style="left:161px;top:653px"><i style="left:1px;top:3px;width:6px;height:1.3px;background:#2a2a2a"></i><i style="left:3.3px;top:0.5px;width:1.4px;height:6.5px;background:#2a2a2a"></i></div><div class="sb" style="left:161px;top:663px"><i style="left:2.5px;top:4px;width:3.5px;height:1.5px;background:#2a2a2a"></i></div>
<div class="t " style="left:209.5px;top:640px;font-size:10px;line-height:14px;color:#000;">FrenselBias</div>
<div class="sunk" style="left:210px;top:652px;width:40px;height:20px"><span class="ct" style="left:4px;color:#000;-webkit-text-stroke-width:0.5px">0.200</span></div><div class="sb" style="left:250px;top:653px"><i style="left:1px;top:3px;width:6px;height:1.3px;background:#2a2a2a"></i><i style="left:3.3px;top:0.5px;width:1.4px;height:6.5px;background:#2a2a2a"></i></div><div class="sb" style="left:250px;top:663px"><i style="left:2.5px;top:4px;width:3.5px;height:1.5px;background:#2a2a2a"></i></div>
<div class="t " style="left:281.5px;top:640px;font-size:10px;line-height:14px;color:#000;">FrenselPow</div>
<div class="sunk" style="left:282px;top:652px;width:40px;height:20px"><span class="ct" style="left:4px;color:#000;-webkit-text-stroke-width:0.5px">8</span></div><div class="sb" style="left:322px;top:653px"><i style="left:1px;top:3px;width:6px;height:1.3px;background:#2a2a2a"></i><i style="left:3.3px;top:0.5px;width:1.4px;height:6.5px;background:#2a2a2a"></i></div><div class="sb" style="left:322px;top:663px"><i style="left:2.5px;top:4px;width:3.5px;height:1.5px;background:#2a2a2a"></i></div>
<div class="chk" style="left:353px;top:640px"></div>
<div class="t " style="left:369.5px;top:640px;font-size:10px;line-height:14px;color:#000;">AlphaDissolveFilter</div>
</div>
</body></html>
